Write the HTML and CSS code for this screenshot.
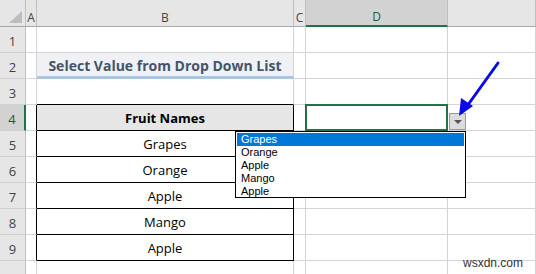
FILE: index.html
```html
<!DOCTYPE html>
<html lang="en">
<head>
    <meta charset="UTF-8">
    <meta name="viewport" content="width=device-width, initial-scale=1.0">
    <title>Select Value from Drop Down List</title>
    <link rel="stylesheet" href="styles.css">
</head>
<body>
    <div class="sheet">
        <!-- column headers -->
        <div class="hd corner"><span class="tri"></span></div>
        <div class="hd col">A</div>
        <div class="hd col">B</div>
        <div class="hd col">C</div>
        <div class="hd col active-col">D</div>
        <div class="hd col"></div>

        <!-- row 1 -->
        <div class="hd row">1</div><div class="c"></div><div class="c"></div><div class="c"></div><div class="c"></div><div class="c"></div>
        <!-- row 2 -->
        <div class="hd row">2</div><div class="c"></div><div class="c title">Select Value from Drop Down List</div><div class="c"></div><div class="c"></div><div class="c"></div>
        <!-- row 3 -->
        <div class="hd row">3</div><div class="c"></div><div class="c above-table"></div><div class="c"></div><div class="c"></div><div class="c"></div>
        <!-- row 4 -->
        <div class="hd row active-row">4</div><div class="c before-table"></div><div class="c tb th">Fruit Names</div><div class="c"></div><div class="c picked"></div><div class="c"></div>
        <!-- rows 5-9 -->
        <div class="hd row">5</div><div class="c before-table"></div><div class="c tb">Grapes</div><div class="c"></div><div class="c"></div><div class="c"></div>
        <div class="hd row">6</div><div class="c before-table"></div><div class="c tb">Orange</div><div class="c"></div><div class="c"></div><div class="c"></div>
        <div class="hd row">7</div><div class="c before-table"></div><div class="c tb">Apple</div><div class="c"></div><div class="c"></div><div class="c"></div>
        <div class="hd row">8</div><div class="c before-table"></div><div class="c tb">Mango</div><div class="c"></div><div class="c"></div><div class="c"></div>
        <div class="hd row">9</div><div class="c before-table"></div><div class="c tb">Apple</div><div class="c"></div><div class="c"></div><div class="c"></div>
        <!-- row 10 -->
        <div class="hd row"></div><div class="c"></div><div class="c"></div><div class="c"></div><div class="c"></div><div class="c"></div>

        <!-- drop down on D4 -->
        <div class="dd-button"><span class="dd-caret"></span></div>
        <ul class="dd-list">
            <li class="selected">Grapes</li>
            <li>Orange</li>
            <li>Apple</li>
            <li>Mango</li>
            <li>Apple</li>
        </ul>

        <svg class="pointer" width="60" height="70" viewBox="0 0 60 70">
            <line x1="51" y1="10" x2="18" y2="56" stroke="#0a0ae6" stroke-width="3" stroke-linecap="round"/>
            <polygon points="12,63 14,45 26,53" fill="#0a0ae6"/>
        </svg>

        <div class="watermark">wsxdn.com</div>
    </div>
</body>
</html>
```

FILE: styles.css
```css
* {
    margin: 0;
    padding: 0;
    box-sizing: border-box;
}

body {
    font-family: 'Open Sans', 'Liberation Sans', sans-serif;
    background: #ffffff;
    width: 536px;
    height: 274px;
    overflow: hidden;
}

.sheet {
    position: relative;
    display: grid;
    grid-template-columns: 26px 11px 257px 12px 142px 88px;
    grid-template-rows: 27px repeat(10, 26px);
    width: 536px;
    height: 274px;
    overflow: hidden;
}

.c {
    border-right: 1px solid #d4d4d4;
    border-bottom: 1px solid #d4d4d4;
    display: flex;
    align-items: center;
    justify-content: center;
    font-size: 13px;
    color: #000;
}

.hd {
    background: #e6e6e6;
    color: #444;
    font-size: 12px;
    display: flex;
    align-items: center;
    justify-content: center;
}

.col {
    padding-top: 8px;
    border-right: 1px solid #bfbfbf;
    border-bottom: 1px solid #a8a8a8;
}

.corner {
    border-right: 1px solid #bfbfbf;
    border-bottom: 1px solid #a8a8a8;
    position: relative;
}

.corner .tri {
    position: absolute;
    right: 3px;
    bottom: 3px;
    width: 0;
    height: 0;
    border-left: 13px solid transparent;
    border-bottom: 12px solid #bdbdbd;
}

.row {
    border-right: 1px solid #bfbfbf;
    border-bottom: 1px solid #d0d0d0;
    font-size: 13px;
    padding-top: 2px;
}

.active-col {
    background: #d2d2d2;
    color: #1e5b33;
    border-bottom: 2px solid #217346;
}

.active-row {
    background: #d2d2d2;
    color: #1e5b33;
    border-right: 2px solid #217346;
}

.title {
    background: #eff1f5;
    border-bottom: 3px solid #adc4df;
    color: #44546a;
    font-weight: bold;
    font-size: 14px;
    padding-top: 2px;
}

.above-table {
    border-bottom-color: #000;
}

.before-table {
    border-right-color: #000;
}

.tb {
    border-right-color: #000;
    border-bottom-color: #000;
}

.th {
    background: #e7e6e6;
    font-weight: bold;
}

.picked {
    border: 2px solid #217346;
    margin: -1px 0 0 -1px;
}

.dd-button {
    position: absolute;
    left: 449px;
    top: 113px;
    width: 17px;
    height: 17px;
    background: #dcdcdc;
    border: 1px solid #9a9a9a;
    display: flex;
    align-items: center;
    justify-content: center;
}

.dd-caret {
    width: 0;
    height: 0;
    border-left: 4px solid transparent;
    border-right: 4px solid transparent;
    border-top: 4px solid #555;
}

.dd-list {
    position: absolute;
    left: 235px;
    top: 131px;
    width: 231px;
    height: 67px;
    background: #fff;
    border: 1px solid #000;
    list-style: none;
    padding: 1px 1px 0 1px;
    font-family: 'Liberation Sans', Arial, sans-serif;
    font-size: 11px;
}

.dd-list li {
    height: 13px;
    line-height: 13px;
    padding-left: 4px;
    color: #000;
}

.dd-list li.selected {
    background: #0078d7;
    color: #fff;
}

.pointer {
    position: absolute;
    left: 447px;
    top: 53px;
}

.watermark {
    position: absolute;
    left: 463px;
    top: 256px;
    font-family: 'Liberation Sans', Arial, sans-serif;
    font-size: 12px;
    color: #333;
}
```
